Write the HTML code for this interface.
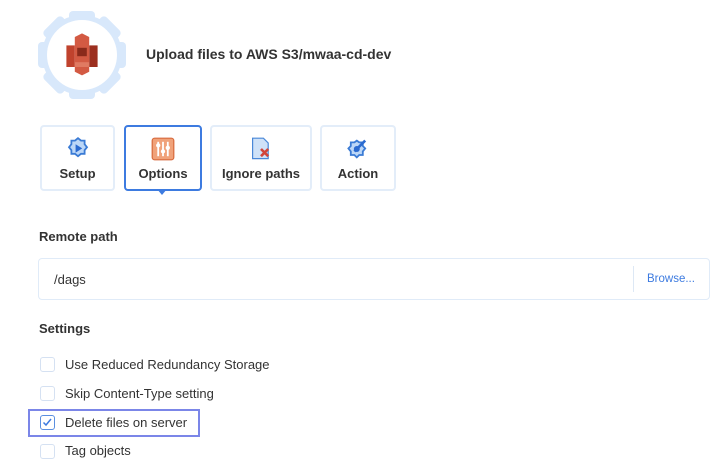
<!DOCTYPE html>
<html><head><style>
body{margin:0;width:720px;height:474px;background:#fff;font-family:"Liberation Sans",sans-serif;color:#333;position:relative;overflow:hidden}
.a{position:absolute}
.tab{position:absolute;top:125px;height:66px;border:2px solid #e3edf9;border-radius:4px;box-sizing:border-box;background:#fff;text-align:center;font-size:13px;font-weight:bold;color:#333}
.tab span{position:absolute;left:0;right:0;top:39px}
.tab svg{position:absolute;left:50%;top:10px;margin-left:-12px}
.cb{position:absolute;left:40px;width:15px;height:15px;border:1.5px solid #d5e1f2;border-radius:3px;box-sizing:border-box}
.lbl{position:absolute;left:65px;font-size:13px;color:#333}
</style></head><body>
<svg class="a" style="left:35px;top:8px" width="94" height="94" viewBox="-47 -47 94 94">
<g fill="#d8e8fb">
<circle r="40"/>
<g id="t"><rect x="-13" y="-44" width="26" height="10" rx="4"/></g>
<use href="#t" transform="rotate(45)"/><use href="#t" transform="rotate(90)"/><use href="#t" transform="rotate(135)"/><use href="#t" transform="rotate(180)"/><use href="#t" transform="rotate(225)"/><use href="#t" transform="rotate(270)"/><use href="#t" transform="rotate(315)"/>
</g>
<circle r="35" fill="#fff"/>
<g transform="scale(1.2)">
<rect x="-13" y="-8" width="7" height="18" fill="#c0422d"/>
<rect x="6" y="-8" width="7" height="18" fill="#9c2f1f"/>
<polygon points="-6,-15 0,-18 6,-15 6,14 0,17 -6,14" fill="#d35a43"/>
<rect x="-4" y="-6" width="8" height="7" fill="#8a2a1b"/>
<rect x="-6" y="6" width="12" height="4" fill="#e07a62"/>
</g>
</svg>
<div class="a" style="left:146px;top:46px;font-size:14px;font-weight:bold;color:#333">Upload files to AWS S3/mwaa-cd-dev</div>

<div class="tab" style="left:40px;width:75px"><svg width="24" height="24" viewBox="0 0 20 20"><path d="M10 1l2.5 2h3v3l2 2.5-2 2.5v3h-3l-2.5 2-2.5-2h-3v-3l-2-2.5 2-2.5v-3h3z" fill="#bcd7f7" stroke="#3a7bd5" stroke-width="1.5"/><path d="M8 6v7l5.5-3.5z" fill="#2a6ad0"/></svg><span>Setup</span></div>
<div class="tab" style="left:124px;width:78px;border-color:#3d7be0"><svg width="24" height="24" viewBox="0 0 20 20"><rect x="1" y="1" width="18" height="18" rx="2" fill="#f0a27a" stroke="#d86a3c"/><g stroke="#fff" stroke-width="1.5"><line x1="6" y1="4" x2="6" y2="16"/><line x1="10" y1="4" x2="10" y2="16"/><line x1="14" y1="4" x2="14" y2="16"/></g><circle cx="6" cy="7" r="1.8" fill="#fff"/><circle cx="10" cy="12" r="1.8" fill="#fff"/><circle cx="14" cy="9" r="1.8" fill="#fff"/></svg><span>Options</span></div>
<div class="a" style="left:157px;top:189px;width:0;height:0;border-left:5px solid transparent;border-right:5px solid transparent;border-top:6px solid #3d7be0"></div>
<div class="tab" style="left:210px;width:102px"><svg width="24" height="24" viewBox="0 0 20 20"><path d="M3 1h9l4 4v13H3z" fill="#cfe2f8" stroke="#4a88d8"/><path d="M10 10l6 6M16 10l-6 6" stroke="#d2453a" stroke-width="2.2"/></svg><span>Ignore paths</span></div>
<div class="tab" style="left:320px;width:76px"><svg width="24" height="24" viewBox="0 0 20 20"><path d="M9 3l2 1.5h3v3l2 2-2 2.5v3h-3l-2 2-2-2H4v-3l-2-2.5 2-2v-3h3z" fill="#bcd7f7" stroke="#3a7bd5" stroke-width="1.5"/><path d="M7 12l9-9" stroke="#2a6ad0" stroke-width="2.2"/><circle cx="9" cy="10" r="2.5" fill="#2a6ad0"/></svg><span>Action</span></div>

<div class="a" style="left:39px;top:229px;font-size:13px;font-weight:bold">Remote path</div>
<div class="a" style="left:38px;top:258px;width:672px;height:42px;border:1.5px solid #e0ebf8;border-radius:4px;box-sizing:border-box"></div>
<div class="a" style="left:54px;top:272px;font-size:13px">/dags</div>
<div class="a" style="left:633px;top:266px;width:1px;height:26px;background:#dde8f5"></div>
<div class="a" style="left:647px;top:273px;font-size:11.5px;color:#3d7be0">Browse...</div>

<div class="a" style="left:39px;top:321px;font-size:13px;font-weight:bold">Settings</div>
<div class="cb" style="top:357px"></div><div class="lbl" style="top:357px">Use Reduced Redundancy Storage</div>
<div class="cb" style="top:386px"></div><div class="lbl" style="top:386px">Skip Content-Type setting</div>
<div class="a" style="left:28px;top:409px;width:172px;height:28px;border:2px solid #7b86e8;box-sizing:border-box"></div>
<div class="cb" style="top:415px;border-color:#5b8fe0"><svg width="12" height="12" viewBox="0 0 12 12" style="position:absolute;left:0;top:0"><path d="M2.5 6.5l2.5 2.5 5-6" fill="none" stroke="#3d7be0" stroke-width="1.5"/></svg></div><div class="lbl" style="top:415px">Delete files on server</div>
<div class="cb" style="top:444px"></div><div class="lbl" style="top:443px">Tag objects</div>
</body></html>
